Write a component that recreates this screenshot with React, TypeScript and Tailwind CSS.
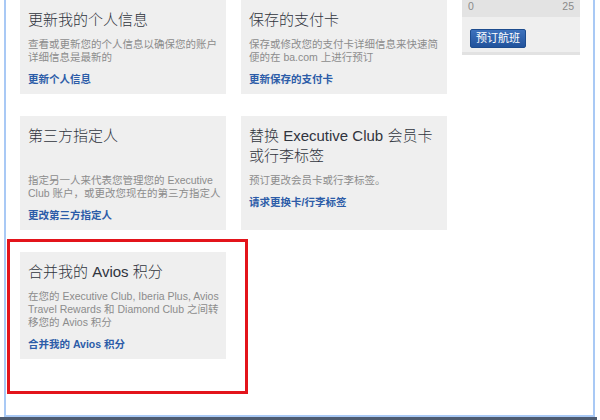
import React from 'react';

interface Card {
  title: string;
  desc: string;
  link: string;
  tall?: boolean;
}

const rows: Card[][] = [
  [
    {
      title: '更新我的个人信息',
      desc: '查看或更新您的个人信息以确保您的账户详细信息是最新的',
      link: '更新个人信息',
    },
    {
      title: '保存的支付卡',
      desc: '保存或修改您的支付卡详细信息来快速简便的在 ba.com 上进行预订',
      link: '更新保存的支付卡',
    },
  ],
  [
    {
      title: '第三方指定人',
      desc: '指定另一人来代表您管理您的 Executive Club 账户，或更改您现在的第三方指定人',
      link: '更改第三方指定人',
      tall: true,
    },
    {
      title: '替换 Executive Club 会员卡或行李标签',
      desc: '预订更改会员卡或行李标签。',
      link: '请求更换卡/行李标签',
      tall: true,
    },
  ],
  [
    {
      title: '合并我的 Avios 积分',
      desc: '在您的 Executive Club, Iberia Plus, Avios Travel Rewards 和 Diamond Club 之间转移您的 Avios 积分',
      link: '合并我的 Avios 积分',
    },
  ],
];

function InfoCard({ card }: { card: Card }) {
  return (
    <div className="bg-[#efefef] pt-[10px] pb-[8px] pl-[8px] pr-[4px]">
      <h3
        className={`text-[15px] leading-[20px] text-[#30343d] font-light ${
          card.tall ? 'min-h-[40px]' : ''
        }`}
      >
        {card.title}
      </h3>
      <p className="mt-[8px] text-[10.5px] leading-[13px] text-[#8c8c8c]">{card.desc}</p>
      <a className="block mt-[9px] text-[10.5px] leading-[13px] font-bold text-[#2c5ca8]">
        {card.link}
      </a>
    </div>
  );
}

export default function App() {
  return (
    <div
      className="relative w-[600px] h-[420px] bg-white overflow-hidden"
      style={{ fontFamily: '"Liberation Sans", Arial, "Noto Sans CJK SC", sans-serif' }}
    >
      <div className="ml-[4px] w-[591px] h-[417px] border-l-2 border-r-2 border-b-2 border-[#a9c9f5] flex pl-[14px] gap-[15px]">
        {/* cards */}
        <div className="grid grid-cols-[206px_206px] gap-x-[15px] gap-y-[22px] content-start">
          {rows.map((row, i) =>
            row.map((card, j) => <InfoCard key={`${i}-${j}`} card={card} />)
          )}
        </div>

        {/* right column */}
        <div className="w-[118px] self-start">
          <div className="bg-[#e3e3e3] h-[17px] flex justify-between items-start px-[6px] text-[10.5px] leading-[13px] text-[#8a8a8a]">
            <span>0</span>
            <span>25</span>
          </div>
          <div className="bg-[#efefef] h-[35px] pl-[8px] pt-[8px]">
            <button className="h-[19px] w-[56px] rounded-[2px] border border-[#1d4c8e] bg-gradient-to-b from-[#3d72bd] to-[#22539c] text-white text-[11px] leading-[17px]">
              预订航班
            </button>
          </div>
          <div className="bg-[#e2e2e2] h-[3px]" />
        </div>
      </div>
      <div className="h-[3px] w-[597px] bg-[#4d5b70]" />

      {/* annotation */}
      <div className="absolute left-[7px] top-[239px] w-[241px] h-[155px] border-[3px] border-[#e3141b]" />
    </div>
  );
}
